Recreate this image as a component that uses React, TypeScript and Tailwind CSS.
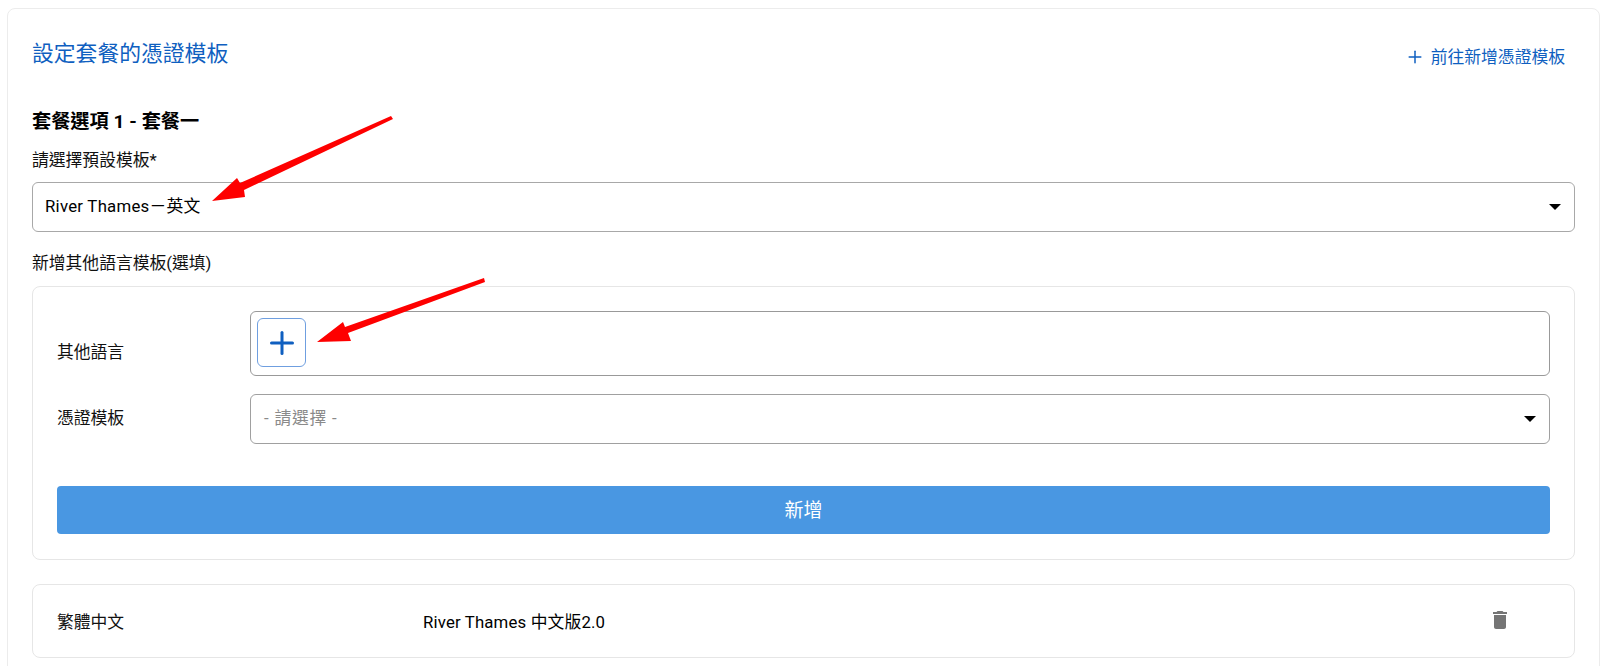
import React from 'react';
import { Plus } from 'lucide-react';

const FONT = "font-['Roboto','Noto_Sans_CJK_TC',sans-serif]";

const Caret = () => <span className="h-0 w-0 border-x-[6px] border-t-[6px] border-x-transparent border-t-black" />;

// red annotation arrows pasted over the screenshot
const Arrows = () => (
  <svg className="pointer-events-none absolute left-0 top-0" width="1600" height="666" viewBox="0 0 1600 666">
    <polygon points="391,116 393,119 244,190 245,197 212,201 237,178 240,183" fill="#fe0000" />
    <polygon points="484,278 485,282 348,333 351,341 317,342 343,322 345,327" fill="#fe0000" />
  </svg>
);

export default function App() {
  return (
    <div className={`relative h-[666px] overflow-hidden bg-white pl-[7px] pt-2 text-[16.8px] text-[#111111] ${FONT}`}>
      <div className="h-[700px] w-[1593px] rounded-lg border border-[#ececec] px-6">
        <div className="flex items-start justify-between pt-[29px]">
          <h2 className="h-8 text-[21.8px] leading-8 text-[#0f5fc0]">設定套餐的憑證模板</h2>
          <a className="mr-[10px] mt-[7px] flex h-6 items-center gap-[6px] leading-6 text-[#0f5fc0]">
            <Plus size={20} strokeWidth={1.8} />
            前往新增憑證模板
          </a>
        </div>

        <h3 className="mt-[38px] h-7 text-[19.2px] font-bold leading-7 text-black">套餐選項 1 - 套餐一</h3>
        <label className="mt-[12px] block h-6 leading-6">請選擇預設模板*</label>

        <div className="mt-[10px] flex h-[50px] items-center justify-between rounded-md border border-[#a8a8a8] px-[12px] pr-[13px] text-black">
          <span className="tracking-[0.25px]">River Thames－英文</span>
          <Caret />
        </div>

        <label className="mt-[19px] block h-6 leading-6">新增其他語言模板(選填)</label>

        <div className="mt-[11px] h-[274px] rounded-lg border border-[#e6e6e6] px-6 pt-6">
          <div className="flex h-[65px] items-center">
            <span className="w-[193px] pt-[18px]">其他語言</span>
            <div className="flex h-full flex-1 rounded-md border border-[#999999] px-[6px] pt-[6px]">
              <button className="flex h-[49px] w-[49px] items-center justify-center rounded-md border border-[#6f9fe0] text-[#0f5fc0]">
                <Plus size={36} strokeWidth={2} />
              </button>
            </div>
          </div>
          <div className="mt-[18px] flex h-[50px] items-center">
            <span className="w-[193px]">憑證模板</span>
            <div className="flex h-full flex-1 items-center justify-between rounded-md border border-[#a0a0a0] px-[13px] text-[#8a8a8a]">
              <span className="tracking-[0.8px]">- 請選擇 -</span>
              <Caret />
            </div>
          </div>
          <button className="mt-[42px] h-[48px] w-full rounded-[4px] bg-[#4997e2] pt-[3px] text-[19px] text-white">新增</button>
        </div>

        <div className="mt-[24px] flex h-[74px] items-center rounded-lg border border-[#e6e6e6] pl-6">
          <span className="w-[366px] pt-[3px]">繁體中文</span>
          <span className="flex-1 pt-[3px] tracking-[0.15px] text-black">River Thames 中文版2.0</span>
          <svg className="mr-[62px] mb-[3px]" width="24" height="24" viewBox="0 0 24 24" fill="#757575">
            <path d="M6 19c0 1.1.9 2 2 2h8c1.1 0 2-.9 2-2V7H6v12zM19 4h-3.5l-1-1h-5l-1 1H5v2h14V4z" />
          </svg>
        </div>
      </div>
      <Arrows />
    </div>
  );
}
